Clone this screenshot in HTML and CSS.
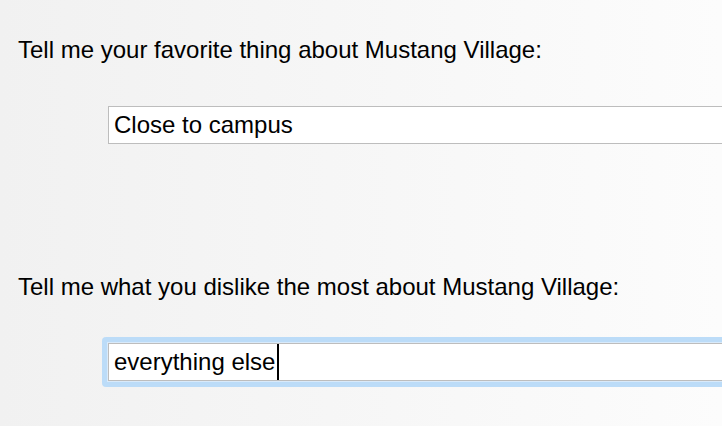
FILE: index.html
```html
<!DOCTYPE html>
<html>
<head>
<meta charset="utf-8">
<link rel="stylesheet" href="styles.css">
</head>
<body>
<main class="form">
  <section class="question">
    <label class="prompt">Tell me your favorite thing about Mustang Village:</label>
    <div class="field"><span class="value">Close to campus</span></div>
  </section>
  <section class="question second">
    <label class="prompt">Tell me what you dislike the most about Mustang Village:</label>
    <div class="ring">
      <div class="field focused"><span class="value">everything else</span><span class="caret"></span></div>
    </div>
  </section>
</main>
</body>
</html>
```
FILE: styles.css
```css
html, body {
  margin: 0;
  height: 100%;
}
body {
  background: linear-gradient(to right, #f1f1f1 0%, #fcfcfc 100%);
  font-family: "Liberation Sans", Arial, sans-serif;
  font-size: 24px;
  color: #000;
  overflow: hidden;
}
.form {
  padding: 36px 0 0 18px;
  display: flex;
  flex-direction: column;
}
.question {
  display: flex;
  flex-direction: column;
}
.second {
  margin-top: 129px;
}
.prompt {
  display: block;
  line-height: 28px;
  white-space: nowrap;
}
.field {
  margin-top: 42px;
  margin-left: 90px;
  height: 36px;
  box-sizing: content-box;
  border: 1px solid #bdbdbd;
  border-right: none;
  background: #fff;
  display: flex;
  align-items: center;
  padding-left: 5px;
}
.value {
  white-space: nowrap;
  line-height: 28px;
}
.ring {
  margin-top: 36px;
  margin-left: 84px;
  padding: 6px 0 6px 6px;
  background: #bcdcf8;
  border-radius: 4px 0 0 4px;
}
.ring .field {
  margin: 0;
  box-shadow: 0 0 0 1px #d9eafa;
}
.caret {
  display: inline-block;
  width: 2px;
  height: 36px;
  background: #000;
  margin-left: 2px;
}
```
